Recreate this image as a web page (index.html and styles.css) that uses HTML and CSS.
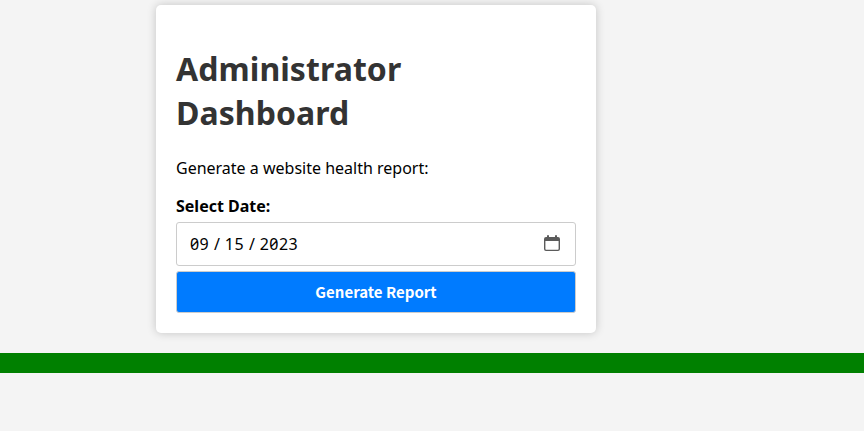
FILE: index.html
```html
<!DOCTYPE html>
<html lang="en">
<head>
<meta charset="utf-8">
<title>Administrator Dashboard</title>
<link rel="stylesheet" href="styles.css">
</head>
<body>
<main class="card">
  <h1 class="title">Administrator Dashboard</h1>
  <p class="intro">Generate a website health report:</p>
  <div class="label">Select Date:</div>
  <div class="date-field">
    <div class="date-value"><span>09</span><span class="slash">/</span><span>15</span><span class="slash">/</span><span>2023</span></div>
    <svg class="calendar" width="16" height="16" viewBox="0 0 16 16" aria-hidden="true">
      <path fill="#5b5b5b" fill-rule="evenodd" d="M3 .3h2V2h6V.3h2V2h1a2 2 0 0 1 2 2v10a2 2 0 0 1-2 2H2a2 2 0 0 1-2-2V4a2 2 0 0 1 2-2h1zM1.4 6v8a.7.7 0 0 0 .7.7h11.8a.7.7 0 0 0 .7-.7V6z"/>
    </svg>
  </div>
  <button class="submit" type="button">Generate Report</button>
</main>
<footer class="bar"></footer>
</body>
</html>
```
FILE: styles.css
```css
body {
  margin: 0;
  background: #f4f4f4;
  color: #000;
  font: 16px/22px "Noto Sans", sans-serif;
}

.card {
  box-sizing: border-box;
  width: 440px;
  margin: 5px 0 20px 156px;
  height: 328px;
  padding: 42px 20px 20px;
  background: #fff;
  border-radius: 5px;
  box-shadow: 0 0 10px rgba(0, 0, 0, 0.2);
}

.title {
  margin: 0;
  color: #333;
  font-size: 32px;
  line-height: 44px;
  letter-spacing: 0.06px;
}

.intro {
  margin: 22px 0 16px;
}

.label {
  margin-bottom: 5px;
  font-weight: 700;
}

.date-field {
  display: flex;
  align-items: center;
  justify-content: space-between;
  box-sizing: border-box;
  height: 44px;
  margin-bottom: 5px;
  padding: 0 15px 0 13px;
  border: 1px solid #ccc;
  border-radius: 3px;
}

.date-value {
  display: flex;
  font-feature-settings: "zero";
  letter-spacing: 0.45px;
}

.slash {
  margin: 0 4.85px;
  letter-spacing: 0;
}

.calendar {
  margin-top: -2px;
}

.submit {
  display: block;
  box-sizing: border-box;
  width: 100%;
  height: 42px;
  padding: 0 0 1px;
  border: 1px solid #ccc;
  border-radius: 3px;
  background: #007bff;
  color: #fff;
  font: 700 15px/22px "Noto Sans CJK JP", sans-serif;
}

.bar {
  height: 20px;
  background: green;
}
```
